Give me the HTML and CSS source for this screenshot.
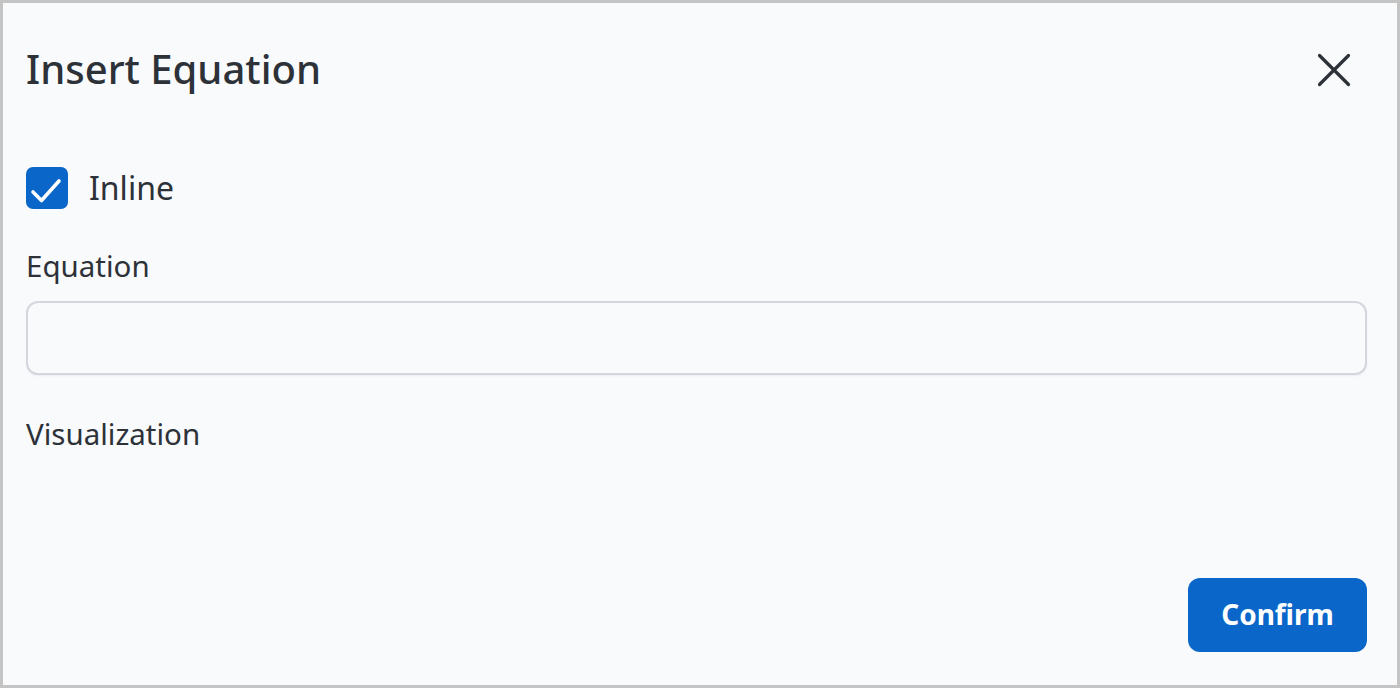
FILE: index.html
```html
<!DOCTYPE html>
<html>
<head>
<meta charset="utf-8">
<link rel="stylesheet" href="styles.css">
</head>
<body>
<div class="dialog">
  <div class="header">
    <h1 class="title">Insert Equation</h1>
    <button class="close" aria-label="Close">
      <svg width="34" height="34" viewBox="0 0 34 34"><path d="M2.5 2.5 L31.5 31.5 M31.5 2.5 L2.5 31.5" stroke="#2d3138" stroke-width="3.2" stroke-linecap="round" fill="none"/></svg>
    </button>
  </div>
  <label class="check-row">
    <span class="checkbox">
      <svg width="42" height="42" viewBox="0 0 42 42"><path d="M7 25 L15.5 33.5 L33 14" stroke="#fff" stroke-width="3.6" stroke-linecap="round" stroke-linejoin="round" fill="none"/></svg>
    </span>
    <span class="check-label">Inline</span>
  </label>
  <div class="field-label">Equation</div>
  <div class="input"></div>
  <div class="field-label vis">Visualization</div>
  <div class="spacer"></div>
  <div class="footer">
    <button class="confirm">Confirm</button>
  </div>
</div>
</body>
</html>
```
FILE: styles.css
```css
* { box-sizing: border-box; }
html, body { margin: 0; padding: 0; }
body {
  font-family: "Noto Sans", "Open Sans", sans-serif;
  color: #2d3138;
  background: #f8fafc;
}
.dialog {
  width: 1400px;
  height: 688px;
  border: 3px solid #c4c4c4;
  background: #f8fafc;
  padding: 0 30px 33px 23px;
  display: flex;
  flex-direction: column;
}
.header {
  display: flex;
  align-items: center;
  justify-content: space-between;
  height: 134px;
}
.title {
  margin: 0;
  font-size: 40px;
  font-weight: 500;
  line-height: 1;
  margin-top: -2px;
}
.close {
  border: none;
  background: none;
  padding: 0;
  margin-right: 16px;
  width: 34px;
  height: 34px;
  display: flex;
}
.check-row {
  display: flex;
  align-items: center;
  gap: 21px;
  margin-top: 30px;
}
.checkbox {
  width: 42px;
  height: 42px;
  border-radius: 7px;
  background: #0a67c9;
  display: flex;
}
.check-label {
  font-size: 32px;
  line-height: 42px;
}
.field-label {
  font-size: 29.5px;
  line-height: 40px;
  margin-top: 37px;
}
.input {
  margin-top: 15px;
  height: 74px;
  border: 2px solid #d3d7dd;
  border-radius: 12px;
  background: #f8fafc;
  box-shadow: 0 1px 2px rgba(0,0,0,0.06);
}
.field-label.vis { margin-top: 39px; }
.spacer { flex: 1; }
.footer {
  display: flex;
  justify-content: flex-end;
}
.confirm {
  width: 179px;
  height: 74px;
  border: none;
  border-radius: 12px;
  background: #0a67c9;
  color: #fff;
  font-family: "Noto Sans", "Open Sans", sans-serif;
  font-size: 28px;
  font-weight: 700;
  padding: 0 0 3px 0;
}
```
